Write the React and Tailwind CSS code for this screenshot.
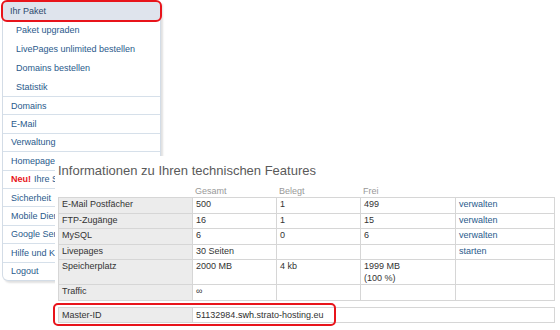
import React from "react";

const subItems = ["Paket upgraden", "LivePages unlimited bestellen", "Domains bestellen", "Statistik"];

// items from "Homepage" on lie partly under the info panel, so their labels are clipped
const mainItems = [
    { label: "Domains" },
    { label: "E-Mail" },
    { label: "Verwaltung" },
    { label: "Homepage", clip: true },
    { label: "Ihre Seite", neu: true, clip: true },
    { label: "Sicherheit", clip: true },
    { label: "Mobile Dienste", clip: true },
    { label: "Google Services", clip: true },
    { label: "Hilfe und Kontakt", clip: true },
    { label: "Logout" },
];

const rows = [
    { name: "E-Mail Postfächer", total: "500", used: "1", free: "499", action: "verwalten" },
    { name: "FTP-Zugänge", total: "16", used: "1", free: "15", action: "verwalten" },
    { name: "MySQL", total: "6", used: "0", free: "6", action: "verwalten" },
    { name: "Livepages", total: "30 Seiten", used: "", free: "", action: "starten" },
    { name: "Speicherplatz", total: "2000 MB", used: "4 kb", free: "1999 MB\n(100 %)", action: "", tall: true },
    { name: "Traffic", total: "∞", used: "", free: "", action: "" },
];

function Sidebar() {
    return (
        <div className="ml-[2px] mt-[2px] w-[159px] rounded-bl-[6px] border-x border-b border-[#d3dce6] bg-white shadow-[2px_2px_2px_rgba(0,0,0,0.12)]">
            <div className="flex h-[18px] items-center rounded-[4px] bg-[#dfe4ed] px-[7px] text-[#2d4a6e] outline-2 outline-[#e8141b]">
                Ihr Paket
            </div>
            {subItems.map((item) => (
                <div key={item} className="flex h-[19px] items-center pl-[13px] text-[#2a5a8c]">
                    {item}
                </div>
            ))}
            {mainItems.map((item) => (
                <div
                    key={item.label}
                    className="flex h-[18.4px] items-center border-t border-[#d6e0ea] pl-[8px] text-[#2a5a8c]"
                >
                    <div className={item.clip ? "w-[44px] overflow-hidden whitespace-nowrap" : "whitespace-nowrap"}>
                        {item.neu && <span className="mr-[3px] font-bold text-[#e8141b]">Neu!</span>}
                        {item.label}
                    </div>
                </div>
            ))}
        </div>
    );
}

function InfoPanel() {
    return (
        <div className="absolute left-[55px] top-[156px] h-[174px] w-[505px] bg-white pl-[3px] pt-[6px]">
            <h2 className="text-[13px] leading-[18px] text-[#5a5a5a]">Informationen zu Ihren technischen Features</h2>
            <div className="mt-[5px] flex h-[12px] items-center text-[#999]">
                <div className="w-[137px]" />
                <div className="w-[84px]">Gesamt</div>
                <div className="w-[84px]">Belegt</div>
                <div>Frei</div>
            </div>
            <table className="w-[497px] border-collapse text-[#333]">
                <tbody>
                    {rows.map((row) => (
                        <tr key={row.name} className={row.tall ? "h-[25px]" : "h-[15.5px]"}>
                            <td className="w-[134px] border border-[#d6d6d6] bg-[#ececec] px-[3px] align-top">{row.name}</td>
                            <td className="w-[84px] border border-[#d6d6d6] px-[3px] align-top">{row.total}</td>
                            <td className="w-[84px] border border-[#d6d6d6] px-[3px] align-top">{row.used}</td>
                            <td className="w-[95px] border border-[#d6d6d6] px-[3px] align-top whitespace-pre-line">{row.free}</td>
                            <td className="border border-[#d6d6d6] px-[3px] align-top text-[#2a5a8c]">{row.action}</td>
                        </tr>
                    ))}
                </tbody>
            </table>
            <div className="relative mt-[6px]">
                <table className="w-[497px] border-collapse text-[#333]">
                    <tbody>
                        <tr className="h-[15px]">
                            <td className="w-[134px] border border-[#d6d6d6] bg-[#ececec] px-[3px]">Master-ID</td>
                            <td className="border border-[#d6d6d6] px-[3px]">
                                51132984.<span className="bg-white text-[#222]">swh</span>.strato-hosting.eu
                            </td>
                        </tr>
                    </tbody>
                </table>
                <div className="absolute -left-[5px] -top-[4px] h-[23px] w-[283px] rounded-[5px] border-2 border-[#e8141b]" />
            </div>
        </div>
    );
}

export default function App() {
    return (
        <div
            className="relative h-[330px] w-[560px] overflow-hidden bg-white text-[9px] leading-[12px]"
            style={{ fontFamily: '"Liberation Sans", Arial, sans-serif' }}
        >
            <Sidebar />
            <InfoPanel />
        </div>
    );
}
